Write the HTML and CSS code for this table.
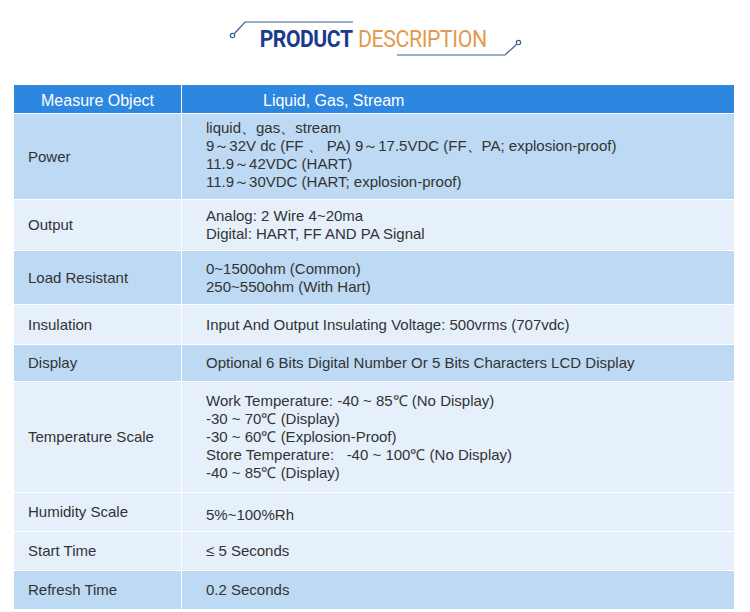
FILE: index.html
```html
<!DOCTYPE html>
<html>
<head>
<meta charset="utf-8">
<link rel="stylesheet" href="styles.css">
</head>
<body>
<div class="title-area">
  <svg class="deco" width="750" height="85" viewBox="0 0 750 85">
    <g fill="none" stroke="#3d5f93" stroke-width="1.2">
      <polyline points="234.5,33.5 245,22 353,22"/>
      <circle cx="232.5" cy="35.5" r="2.2" fill="#fff"/>
      <polyline points="397,55 505,55 516.5,44.5"/>
      <circle cx="518.5" cy="42.5" r="2.2" fill="#fff"/>
    </g>
  </svg>
  <h1 class="title"><span class="t-strong">PRODUCT</span> <span class="t-light">DESCRIPTION</span></h1>
</div>
<div class="spec">
  <div class="row head"><div class="k">Measure Object</div><div class="v">Liquid, Gas, Stream</div></div>
  <div class="row dark h-power"><div class="k">Power</div><div class="v up">liquid、gas、stream<br>9～32V dc (FF 、 PA) 9～17.5VDC (FF、PA; explosion-proof)<br>11.9～42VDC (HART)<br>11.9～30VDC (HART; explosion-proof)</div></div>
  <div class="row light h-output"><div class="k">Output</div><div class="v">Analog: 2 Wire 4~20ma<br>Digital: HART, FF AND PA Signal</div></div>
  <div class="row dark h-load"><div class="k">Load Resistant</div><div class="v">0~1500ohm (Common)<br>250~550ohm (With Hart)</div></div>
  <div class="row light h-ins"><div class="k">Insulation</div><div class="v">Input And Output Insulating Voltage: 500vrms (707vdc)</div></div>
  <div class="row dark h-disp"><div class="k">Display</div><div class="v">Optional 6 Bits Digital Number Or 5 Bits Characters LCD Display</div></div>
  <div class="row light h-temp"><div class="k">Temperature Scale</div><div class="v">Work Temperature: -40 ~ 85℃ (No Display)<br>-30 ~ 70℃ (Display)<br>-30 ~ 60℃ (Explosion-Proof)<br>Store Temperature: &nbsp;&nbsp;-40 ~ 100℃ (No Display)<br>-40 ~ 85℃ (Display)</div></div>
  <div class="row light h-small"><div class="k">Humidity Scale</div><div class="v low">5%~100%Rh</div></div>
  <div class="row light h-small"><div class="k">Start Time</div><div class="v">≤ 5 Seconds</div></div>
  <div class="row dark h-small"><div class="k">Refresh Time</div><div class="v">0.2 Seconds</div></div>
</div>
</body>
</html>
```
FILE: styles.css
```css
html, body {
  margin: 0;
  padding: 0;
  background: #fff;
}
body {
  width: 750px;
  height: 612px;
  overflow: hidden;
  font-family: "Liberation Sans", Arial, sans-serif;
}
.title-area {
  position: relative;
  height: 85px;
  display: flex;
  justify-content: center;
}
.deco {
  position: absolute;
  left: 0;
  top: 0;
}
.title {
  position: relative;
  margin: 25px 0 0 0;
  font-family: Roboto, "Liberation Sans", sans-serif;
  font-size: 24px;
  line-height: 28px;
  font-weight: normal;
  letter-spacing: -0.5px;
  white-space: nowrap;
}
.t-strong {
  font-weight: 700;
  color: #1b3c8c;
  display: inline-block;
  transform: scaleX(0.88);
  transform-origin: right center;
}
.t-light {
  color: #e39a4f;
  font-weight: 400;
  display: inline-block;
  transform: scaleX(0.89);
  transform-origin: left center;
}
.spec {
  margin: 0 16px 0 14px;
  display: flex;
  flex-direction: column;
  gap: 1px;
  font-size: 15px;
  line-height: 18px;
  color: #333;
}
.row {
  display: grid;
  grid-template-columns: 167px 1fr;
  column-gap: 1px;
  background: #fff;
}
.row > div {
  display: flex;
  align-items: center;
  box-sizing: border-box;
}
.k {
  padding-left: 14px;
}
.v {
  padding-left: 24px;
}
.head { height: 28px; }
.head > div {
  background: #2d87e1;
  color: #fff;
  font-size: 16px;
  padding-top: 3px;
}
.head .k {
  justify-content: center;
  padding-left: 0;
}
.head .v {
  padding-left: 81px;
}
.dark > div { background: #bdd9f3; }
.light > div { background: #e5f0fb; }
.h-power { height: 85px; }
.h-output { height: 50px; }
.h-load { height: 53px; }
.h-ins { height: 39px; }
.h-disp { height: 36px; }
.h-temp { height: 110px; }
.h-small { height: 38px; }
.v.low { padding-top: 6px; }
.v.up { padding-bottom: 3px; }
```
